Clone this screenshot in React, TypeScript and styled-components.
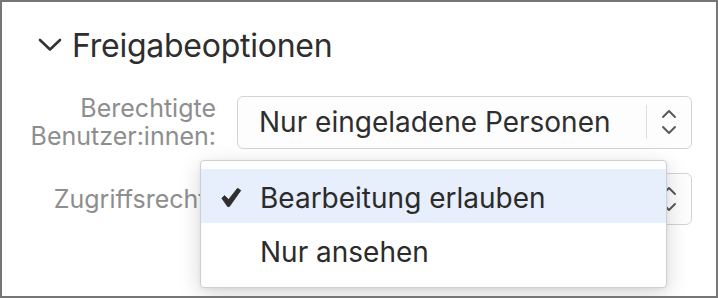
import React from "react";
import styled, { createGlobalStyle } from "styled-components";

const Global = createGlobalStyle`
  html, body { margin: 0; padding: 0; background: #ffffff; }
  body { font-family: Inter, "Noto Sans", "Liberation Sans", sans-serif; -webkit-font-smoothing: antialiased; }
  * { box-sizing: border-box; }
`;

const Frame = styled.div`
  position: relative;
  width: 718px;
  height: 298px;
  border: 2px solid #767676;
  background: #ffffff;
  overflow: hidden;
  padding: 23px 24px 0 16px;
`;

const Header = styled.div`
  display: flex;
  align-items: center;
  gap: 10px;
  height: 40px;
  padding-left: 20px;
  color: #2e2e2e;
  font-size: 32px;
  font-weight: 400;
  letter-spacing: -0.25px;
`;

const Form = styled.div`
  display: grid;
  grid-template-columns: 198px 455px;
  column-gap: 21px;
  row-gap: 23px;
  margin-top: 29px;
  align-items: center;
`;

const Label = styled.div<{ $overhang?: number }>`
  text-align: right;
  color: #8e8e8e;
  font-size: 25px;
  line-height: 28px;
  white-space: nowrap;
  margin-right: ${(p) => -(p.$overhang ?? 0)}px;
`;

const Select = styled.div<{ $h: number }>`
  display: flex;
  align-items: center;
  height: ${(p) => p.$h}px;
  border: 1px solid #d3d3d3;
  border-radius: 6px;
  background: #fdfdfd;
`;

const Value = styled.div`
  flex: 1;
  padding-left: 21px;
  color: #2e2e2e;
  font-size: 28px;
  white-space: nowrap;
`;

const Divider = styled.div`
  width: 1px;
  height: 34px;
  background: #dedede;
`;

const Stepper = styled.div`
  width: 44px;
  display: flex;
  justify-content: center;
  align-items: center;
`;

const Menu = styled.div`
  position: absolute;
  left: 198px;
  top: 158px;
  width: 467px;
  height: 128px;
  background: #ffffff;
  border: 1px solid #cfcfcf;
  border-radius: 4px;
  box-shadow: 0 6px 22px rgba(0, 0, 0, 0.16), 0 1px 4px rgba(0, 0, 0, 0.06);
  padding: 8px 0;
`;

const Item = styled.div<{ $active?: boolean }>`
  display: flex;
  align-items: center;
  height: 54px;
  padding: 3px 0 0 20px;
  gap: 18px;
  background: ${(p) => (p.$active ? "#e7eefc" : "transparent")};
  color: #2b2b2b;
  font-size: 28px;
  white-space: nowrap;
`;

const CheckSlot = styled.div`
  width: 21px;
  height: 21px;
  display: flex;
  align-items: center;
  justify-content: center;
`;

const Chevron = () => (
  <svg width="24" height="14" viewBox="0 0 24 14">
    <polyline points="2,2 12,11.5 22,2" fill="none" stroke="#333" strokeWidth="2.6" strokeLinecap="round" strokeLinejoin="round" />
  </svg>
);

const UpDown = () => (
  <svg width="16" height="28" viewBox="0 0 16 28">
    <polyline points="2,9 8,3 14,9" fill="none" stroke="#575757" strokeWidth="1.9" strokeLinecap="round" strokeLinejoin="round" />
    <polyline points="2,19 8,25 14,19" fill="none" stroke="#575757" strokeWidth="1.9" strokeLinecap="round" strokeLinejoin="round" />
  </svg>
);

const Check = () => (
  <svg width="21" height="21" viewBox="0 0 21 21">
    <path d="M0.8 11.2 L3.6 8.6 L7.6 12.6 L16.6 1.2 L19.8 3.4 L8.4 19.6 L6.6 19.6 Z" fill="#2f2f2f" strokeLinejoin="round" stroke="#2f2f2f" strokeWidth="0.8" />
  </svg>
);

export default function App() {
  return (
    <>
      <Global />
      <Frame>
        <Header>
          <Chevron />
          <span>Freigabeoptionen</span>
        </Header>
        <Form>
          <Label>
            Berechtigte
            <br />
            Benutzer:innen:
          </Label>
          <Select $h={53}>
            <Value>Nur eingeladene Personen</Value>
            <Divider />
            <Stepper>
              <UpDown />
            </Stepper>
          </Select>
          <Label $overhang={12}>Zugriffsrechte:</Label>
          <Select $h={52}>
            <Value />
            <Divider />
            <Stepper>
              <UpDown />
            </Stepper>
          </Select>
        </Form>
        <Menu>
          <Item $active>
            <CheckSlot>
              <Check />
            </CheckSlot>
            <span>Bearbeitung erlauben</span>
          </Item>
          <Item>
            <CheckSlot />
            <span>Nur ansehen</span>
          </Item>
        </Menu>
      </Frame>
    </>
  );
}
